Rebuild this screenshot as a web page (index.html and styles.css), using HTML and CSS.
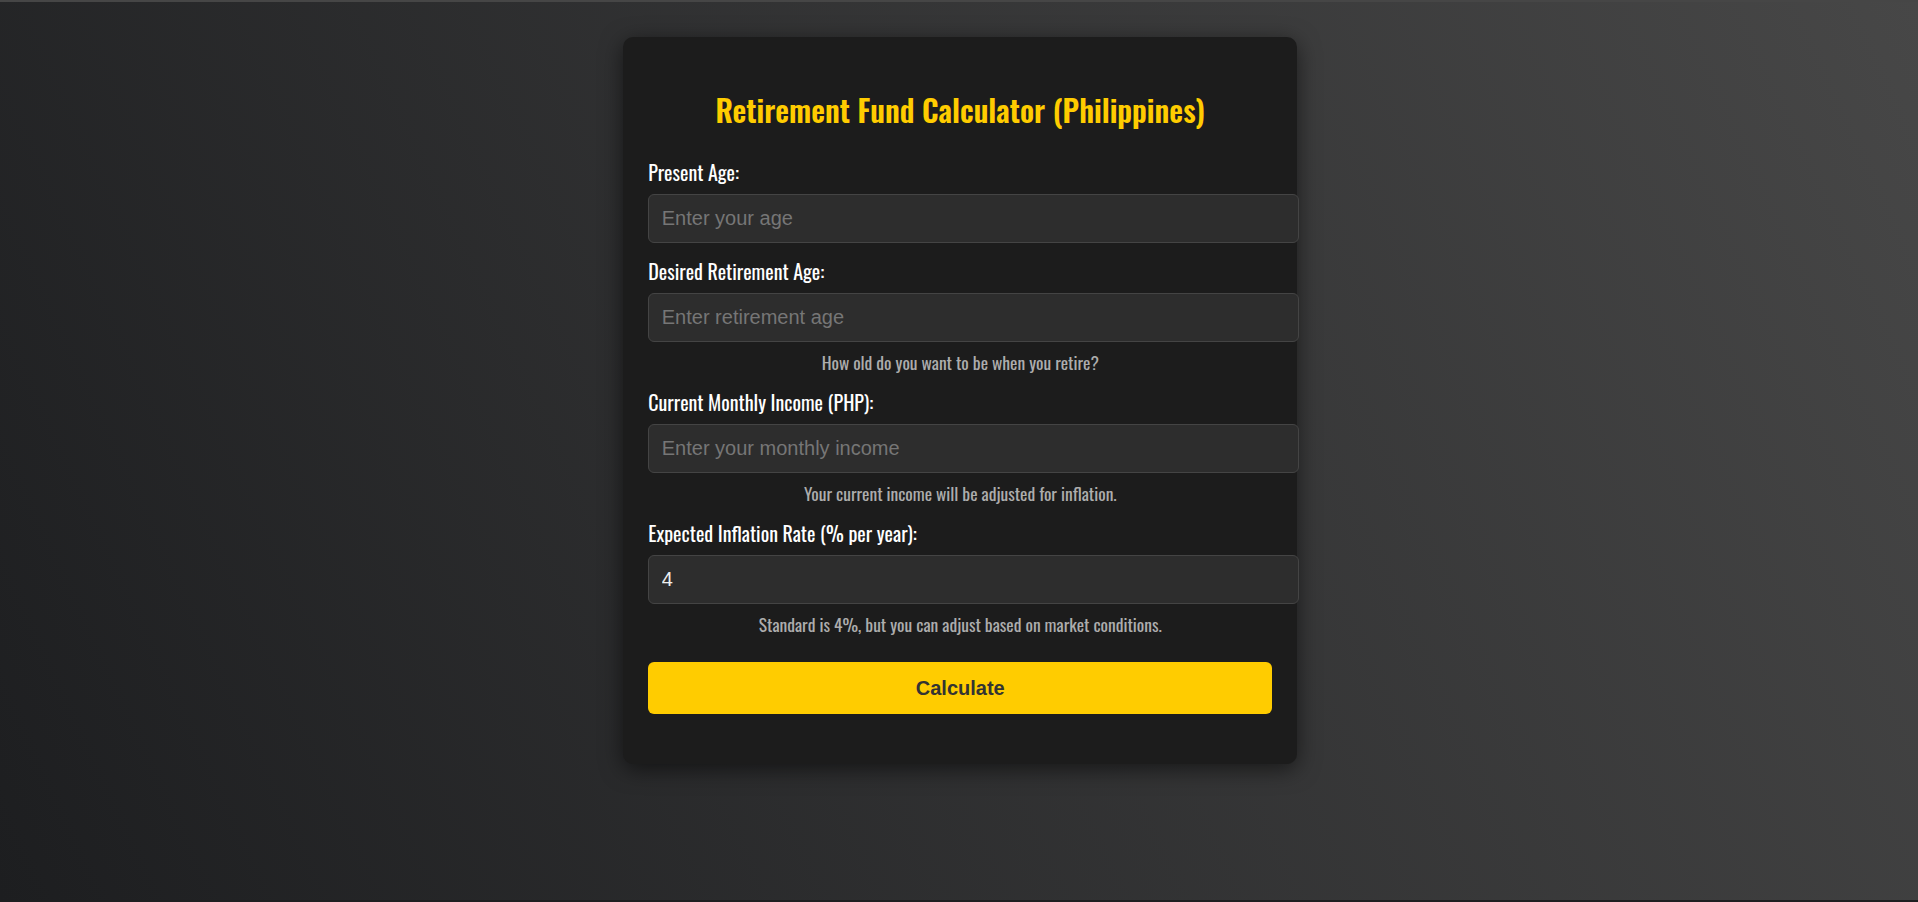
FILE: index.html
```html
<!DOCTYPE html>
<html lang="en">
<head>
<meta charset="utf-8">
<title>Retirement Fund Calculator (Philippines)</title>
<link rel="stylesheet" href="styles.css">
</head>
<body>
<main class="card">
  <h2 class="title">Retirement Fund Calculator (Philippines)</h2>
  <div class="group">
    <label class="label" for="age">Present Age:</label>
    <input class="field" id="age" type="number" placeholder="Enter your age">
  </div>
  <div class="group">
    <label class="label" for="retire">Desired Retirement Age:</label>
    <input class="field" id="retire" type="number" placeholder="Enter retirement age">
    <p class="hint">How old do you want to be when you retire?</p>
  </div>
  <div class="group">
    <label class="label" for="income">Current Monthly Income (PHP):</label>
    <input class="field" id="income" type="number" placeholder="Enter your monthly income">
    <p class="hint">Your current income will be adjusted for inflation.</p>
  </div>
  <div class="group">
    <label class="label" for="inflation">Expected Inflation Rate (% per year):</label>
    <input class="field" id="inflation" type="number" value="4">
    <p class="hint">Standard is 4%, but you can adjust based on market conditions.</p>
  </div>
  <button class="btn" type="button">Calculate</button>
</main>
</body>
</html>
```
FILE: styles.css
```css
html {
  background: #1e1f21;
}
body {
  margin: 0;
  min-height: 900px;
  border-top: 2px solid #464646;
  background: linear-gradient(65deg, #1d1e20 0%, #474747 100%);
  font-family: "Oswald", "Roboto Condensed", sans-serif;
  color: #fff;
  padding: 35px 0 0 2.5px;
  box-sizing: border-box;
}
.card {
  width: 624px;
  margin: 0 auto;
  padding: 25px;
  background: #1c1c1c;
  border-radius: 10px;
  box-shadow: 0 5px 22px rgba(0, 0, 0, 0.55);
}
.title {
  margin: 26px 0 25px;
  text-align: center;
  color: #ffcc00;
  font-size: 30px;
  line-height: 44px;
  font-weight: 600;
}
.group {
  margin-bottom: 13px;
}
.label {
  display: block;
  font-size: 20px;
  line-height: 30px;
  font-weight: 400;
  margin-bottom: 7px;
}
.field {
  display: block;
  box-sizing: border-box;
  width: calc(100% + 27px);
  height: 49px;
  margin: 0;
  padding: 0 12.5px;
  border: 1px solid #444;
  border-radius: 6px;
  background: #2d2d2d;
  color: #eee;
  font-family: "Liberation Sans", Arial, sans-serif;
  font-size: 20px;
  outline: none;
  -moz-appearance: textfield;
}
.field::-webkit-outer-spin-button,
.field::-webkit-inner-spin-button {
  -webkit-appearance: none;
  margin: 0;
}
.field::placeholder {
  color: #767676;
}
.hint {
  margin: 8px 0 0;
  height: 24px;
  line-height: 24px;
  font-size: 17.5px;
  text-align: center;
  color: #adadad;
}
.btn {
  display: block;
  width: 100%;
  height: 52px;
  margin: 26px 0 25px;
  padding: 0;
  border: 0;
  border-radius: 6px;
  background: #ffcc00;
  color: #333;
  font-family: "Liberation Sans", Arial, sans-serif;
  font-size: 20px;
  font-weight: 700;
}
```
